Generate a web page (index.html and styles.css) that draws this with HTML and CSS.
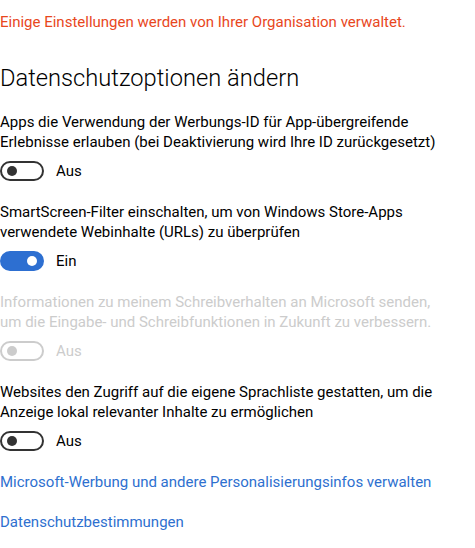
FILE: index.html
```
<!DOCTYPE html>
<html lang="de">
<head>
<meta charset="utf-8">
<link rel="stylesheet" href="styles.css">
</head>
<body>
<main class="page">
  <p class="warn">Einige Einstellungen werden von Ihrer Organisation verwaltet.</p>
  <h2 class="title">Datenschutzoptionen ändern</h2>

  <section class="setting">
    <p class="desc">Apps die Verwendung der Werbungs-ID für App-übergreifende<br>Erlebnisse erlauben (bei Deaktivierung wird Ihre ID zurückgesetzt)</p>
    <div class="row"><span class="toggle"><span class="knob"></span></span><span class="state">Aus</span></div>
  </section>

  <section class="setting">
    <p class="desc">SmartScreen-Filter einschalten, um von Windows Store-Apps<br>verwendete Webinhalte (URLs) zu überprüfen</p>
    <div class="row"><span class="toggle on"><span class="knob"></span></span><span class="state">Ein</span></div>
  </section>

  <section class="setting disabled">
    <p class="desc">Informationen zu meinem Schreibverhalten an Microsoft senden,<br>um die Eingabe- und Schreibfunktionen in Zukunft zu verbessern.</p>
    <div class="row"><span class="toggle"><span class="knob"></span></span><span class="state">Aus</span></div>
  </section>

  <section class="setting">
    <p class="desc">Websites den Zugriff auf die eigene Sprachliste gestatten, um die<br>Anzeige lokal relevanter Inhalte zu ermöglichen</p>
    <div class="row"><span class="toggle"><span class="knob"></span></span><span class="state">Aus</span></div>
  </section>

  <nav class="links">
    <a class="link" href="#">Microsoft-Werbung und andere Personalisierungsinfos verwalten</a>
    <a class="link" href="#">Datenschutzbestimmungen</a>
  </nav>
</main>
</body>
</html>
```
FILE: styles.css
```
html, body {
  margin: 0;
  padding: 0;
  background: #ffffff;
}

body {
  font-family: Roboto, "Liberation Sans", sans-serif;
  font-size: 15px;
  line-height: 20px;
  color: #000000;
}

.page {
  padding-top: 12px;
  display: flex;
  flex-direction: column;
}

.warn {
  margin: 0;
  color: #e8471d;
  white-space: nowrap;
}

.title {
  margin: 30px 0 18px;
  font-size: 23.7px;
  line-height: 32px;
  font-weight: 300;
  color: #000000;
  white-space: nowrap;
}

.setting {
  display: flex;
  flex-direction: column;
  gap: 9px;
  margin-bottom: 21px;
}

.desc {
  margin: 0;
  white-space: nowrap;
}

.row {
  display: flex;
  align-items: center;
  height: 20px;
  gap: 12px;
}

.toggle {
  box-sizing: border-box;
  width: 44px;
  height: 20px;
  border: 2px solid #333333;
  border-radius: 10px;
  display: flex;
  align-items: center;
  padding: 0 5px;
  background: #ffffff;
}

.knob {
  width: 10px;
  height: 10px;
  border-radius: 50%;
  background: #333333;
}

.toggle.on {
  background: #2d6fd1;
  border-color: #2d6fd1;
  justify-content: flex-end;
}

.toggle.on .knob {
  background: #ffffff;
}

.state {
  white-space: nowrap;
}

.disabled .desc,
.disabled .state {
  color: #cccccc;
}

.disabled .toggle {
  border-color: #cccccc;
}

.disabled .knob {
  background: #cccccc;
}

.links {
  display: flex;
  flex-direction: column;
  gap: 20px;
  align-items: flex-start;
}

.link {
  color: #2e70cf;
  text-decoration: none;
  white-space: nowrap;
}
```
